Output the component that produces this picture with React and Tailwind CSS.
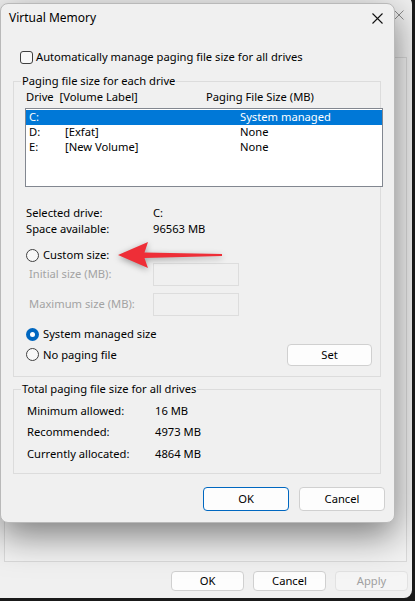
import React from 'react';

const font = { fontFamily: '"Noto Sans", "Liberation Sans", sans-serif' };

function Radio({ checked }) {
    return checked ? (
        <span className="w-[13px] h-[13px] rounded-full bg-[#0067c0] flex items-center justify-center shrink-0">
            <span className="w-[5px] h-[5px] rounded-full bg-white" />
        </span>
    ) : (
        <span className="w-[13px] h-[13px] rounded-full border border-[#404040] bg-[#f8f8f8] shrink-0" />
    );
}

function Btn({ children, primary, disabled, className = '' }) {
    return (
        <div
            className={`flex items-center justify-center rounded-[4px] border ${
                primary ? 'border-[#0067c0]' : disabled ? 'border-[#e2e2e2]' : 'border-[#d0d0d0]'
            } ${disabled ? 'bg-[#f5f5f5] text-[#a0a0a0]' : 'bg-[#fdfdfd] text-black'} ${className}`}
        >
            {children}
        </div>
    );
}

function GroupBox({ title, className = '', children }) {
    return (
        <div className={`relative border border-[#dcdcdc] ${className}`}>
            <span className="absolute -top-[9px] left-[7px] px-[1px] bg-[#f0f0f0] leading-[16px]">{title}</span>
            {children}
        </div>
    );
}

const drives = [
    { d: 'C:', label: '', size: 'System managed', sel: true },
    { d: 'D:', label: '[Exfat]', size: 'None' },
    { d: 'E:', label: '[New Volume]', size: 'None' },
];

export default function App() {
    return (
        <div className="relative w-[415px] h-[601px] overflow-hidden bg-[#1a1a1a] text-[11.2px] text-black" style={font}>
            {/* window behind: Performance Options */}
            <div className="absolute left-[-10px] top-[-4px] w-[422px] h-[602px] rounded-[8px] bg-[#f0f0f0] flex flex-col">
                <div className="h-[36px] flex justify-end items-center pr-[8px] pt-[2px]">
                    <svg width="10" height="10" viewBox="0 0 10 10">
                        <path d="M0.5 0.5 L9.5 9.5 M9.5 0.5 L0.5 9.5" stroke="#8c8c8c" strokeWidth="1" />
                    </svg>
                </div>
                <div className="mt-[25px] ml-[14px] mr-[5px] flex-1 border border-[#d9d9d9] bg-[#f3f3f3]" />
                <div className="mt-[9px] mb-[7px] mr-[4px] flex justify-end gap-[9px]">
                    <Btn className="w-[73px] h-[20px]">OK</Btn>
                    <Btn className="w-[73px] h-[20px]">Cancel</Btn>
                    <Btn disabled className="w-[73px] h-[20px]">Apply</Btn>
                </div>
            </div>

            {/* Virtual Memory dialog */}
            <div className="absolute left-0 top-[3px] w-[395px] h-[520px] rounded-[8px] border border-[#b9b9b9] bg-[#f0f0f0] shadow-[0_12px_36px_rgba(0,0,0,0.5)] flex flex-col">
                <div className="h-[28px] flex items-center justify-between pl-[8px] pr-[11px]">
                    <span className="text-[12px]">Virtual Memory</span>
                    <svg width="11" height="11" viewBox="0 0 11 11">
                        <path d="M0.5 0.5 L10.5 10.5 M10.5 0.5 L0.5 10.5" stroke="#111" strokeWidth="1.1" />
                    </svg>
                </div>

                <div className="mt-[17px] h-[16px] flex items-center pl-[19px] gap-[3px]">
                    <span className="w-[13px] h-[13px] rounded-[3px] border border-[#404040] bg-[#f8f8f8]" />
                    <span>Automatically manage paging file size for all drives</span>
                </div>

                <GroupBox title="Paging file size for each drive" className="mt-[16px] ml-[12px] w-[368px] pt-[7px] pl-[11px] pb-[10px]">
                    <div className="h-[16px] flex items-center pl-[1px]">
                        <span className="w-[180px]">Drive&nbsp; [Volume Label]</span>
                        <span>Paging File Size (MB)</span>
                    </div>
                    <div className="mt-[3px] w-[358px] h-[79px] border border-[#828790] bg-white pt-[1px]">
                        {drives.map((r) => (
                            <div
                                key={r.d}
                                className={`h-[15px] flex items-center pl-[3px] ${r.sel ? 'bg-[#0078d7] text-white' : ''}`}
                            >
                                <span className="w-[36px]">{r.d}</span>
                                <span className="w-[175px]">{r.label}</span>
                                <span>{r.size}</span>
                            </div>
                        ))}
                    </div>

                    <div className="mt-[18px] pl-[1px]">
                        <div className="h-[16px] flex items-center">
                            <span className="w-[127px]">Selected drive:</span>
                            <span>C:</span>
                        </div>
                        <div className="h-[16px] flex items-center">
                            <span className="w-[127px]">Space available:</span>
                            <span>96563 MB</span>
                        </div>
                    </div>

                    <div className="mt-[10px] h-[16px] flex items-center gap-[4px] pl-[1px]">
                        <Radio />
                        <span>Custom size:</span>
                    </div>

                    <div className="h-[23px] flex items-center pl-[4px] text-[#a3a3a3]">
                        <span className="w-[124px]">Initial size (MB):</span>
                        <span className="w-[86px] h-[23px] border border-[#dddddd] bg-[#f0f0f0]" />
                    </div>
                    <div className="mt-[7px] h-[23px] flex items-center pl-[4px] text-[#a3a3a3]">
                        <span className="w-[124px]">Maximum size (MB):</span>
                        <span className="w-[86px] h-[23px] border border-[#dddddd] bg-[#f0f0f0]" />
                    </div>

                    <div className="mt-[10px] h-[16px] flex items-center gap-[4px] pl-[1px]">
                        <Radio checked />
                        <span>System managed size</span>
                    </div>
                    <div className="mt-[2px] h-[22px] flex items-center pl-[1px]">
                        <div className="flex items-center gap-[4px] flex-1">
                            <Radio />
                            <span>No paging file</span>
                        </div>
                        <Btn className="w-[85px] h-[22px] mr-[8px]">Set</Btn>
                    </div>
                </GroupBox>

                <GroupBox title="Total paging file size for all drives" className="mt-[12px] ml-[12px] w-[368px] pt-[13px] pl-[13px] pb-[11px]">
                    <div className="flex flex-col gap-[5.5px]">
                        {[
                            ['Minimum allowed:', '16 MB'],
                            ['Recommended:', '4973 MB'],
                            ['Currently allocated:', '4864 MB'],
                        ].map(([k, v]) => (
                            <div key={k} className="h-[16px] flex items-center">
                                <span className="w-[128px]">{k}</span>
                                <span>{v}</span>
                            </div>
                        ))}
                    </div>
                </GroupBox>

                <div className="mt-[13px] flex justify-end gap-[10px] pr-[9px]">
                    <Btn primary className="w-[86px] h-[24px]">OK</Btn>
                    <Btn className="w-[86px] h-[24px]">Cancel</Btn>
                </div>
            </div>

            {/* red annotation arrow */}
            <svg
                className="absolute left-[110px] top-[235px] drop-shadow-[0_2px_3px_rgba(0,0,0,0.35)]"
                width="120"
                height="40"
                viewBox="0 0 120 40"
            >
                <path d="M8 20 L38 7 Q36 13 34.5 17.5 L112 19 L112 21 L34.5 23 Q36 27.5 38 33 Z" fill="#ee2e37" />
            </svg>
        </div>
    );
}
